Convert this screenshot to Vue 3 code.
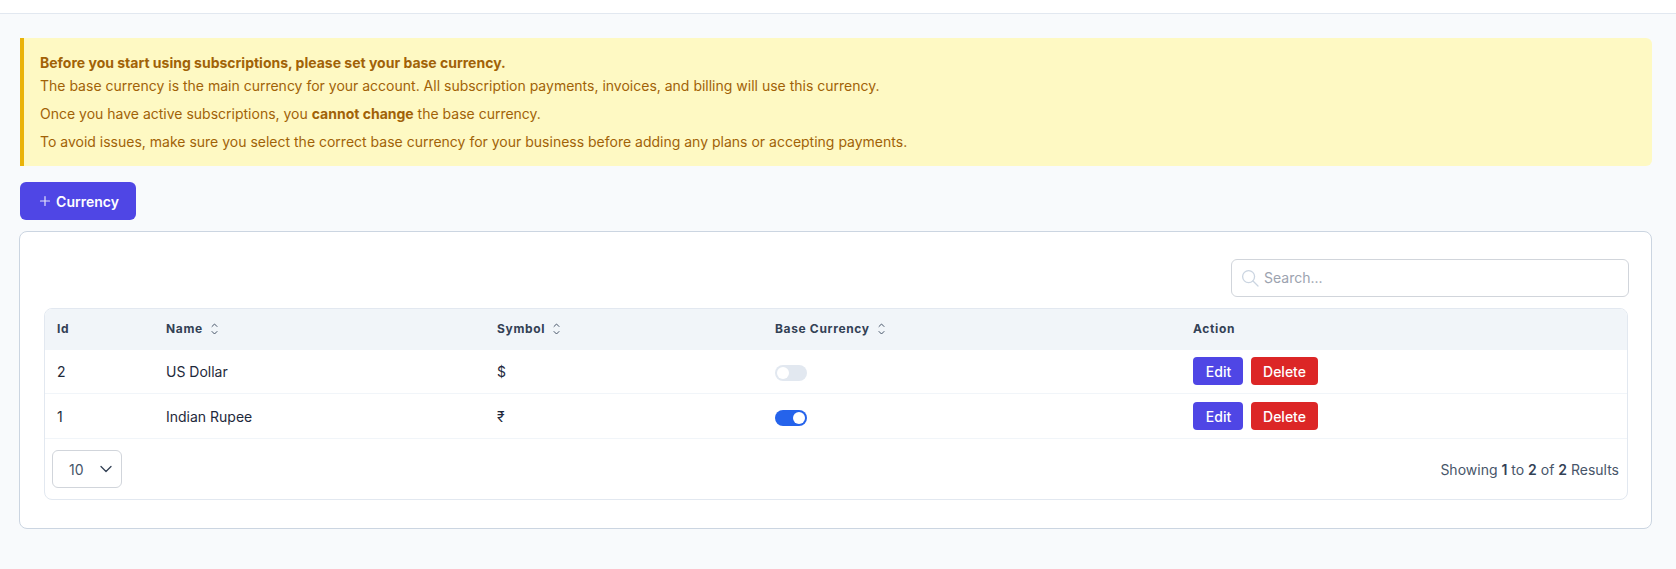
<script setup>
const rows = [
  { id: 2, name: 'US Dollar', symbol: '$', base: false },
  { id: 1, name: 'Indian Rupee', symbol: '₹', base: true },
]
const heads = [
  { label: 'Id', sort: false },
  { label: 'Name', sort: true },
  { label: 'Symbol', sort: true },
  { label: 'Base Currency', sort: true },
  { label: 'Action', sort: false },
]
</script>

<template>
  <div class="page">
    <div class="topbar"></div>
    <main class="content">
      <section class="alert">
        <p class="alert-title">Before you start using subscriptions, please set your base currency.</p>
        <p class="first">The base currency is the main currency for your account. All subscription payments, invoices, and billing will use this currency.</p>
        <p>Once you have active subscriptions, you <strong>cannot change</strong> the base currency.</p>
        <p>To avoid issues, make sure you select the correct base currency for your business before adding any plans or accepting payments.</p>
      </section>

      <button class="add-btn" type="button">
        <svg class="plus" width="14" height="14" viewBox="0 0 14 14" fill="none" stroke="currentColor" stroke-width="1.2" stroke-linecap="round"><path d="M7 2.5v9M2.5 7h9"/></svg>
        <span>Currency</span>
      </button>

      <section class="card">
        <div class="toolbar">
          <label class="search">
            <svg width="18" height="18" viewBox="0 0 18 18" fill="none" stroke="#cbd5e1" stroke-width="1.3" stroke-linecap="round"><circle cx="7.6" cy="7.6" r="6"/><path d="M12 12l5 5"/></svg>
            <input type="text" placeholder="Search..." />
          </label>
        </div>

        <div class="table-wrap">
          <table>
            <colgroup>
              <col class="c1" /><col class="c2" /><col class="c3" /><col class="c4" /><col />
            </colgroup>
            <thead>
              <tr>
                <th v-for="h in heads" :key="h.label">
                  <span class="th-in">
                    {{ h.label }}
                    <svg v-if="h.sort" width="7" height="12" viewBox="0 0 7 12" fill="none" stroke="#475569" stroke-width="1" stroke-linecap="round" stroke-linejoin="round"><path d="M1 3.5L3.5 1 6 3.5M1 8.5L3.5 11 6 8.5"/></svg>
                  </span>
                </th>
              </tr>
            </thead>
            <tbody>
              <tr v-for="r in rows" :key="r.id">
                <td>{{ r.id }}</td>
                <td>{{ r.name }}</td>
                <td>{{ r.symbol }}</td>
                <td>
                  <span class="toggle" :class="{ on: r.base }"><span class="knob"></span></span>
                </td>
                <td>
                  <div class="actions">
                    <button class="mini edit" type="button">Edit</button>
                    <button class="mini del" type="button">Delete</button>
                  </div>
                </td>
              </tr>
            </tbody>
          </table>
          <div class="foot">
            <div class="select">
              <span>10</span>
              <svg width="12" height="8" viewBox="0 0 12 8" fill="none" stroke="#334155" stroke-width="1.3" stroke-linecap="round" stroke-linejoin="round"><path d="M1 1.5L6 6.5l5-5"/></svg>
            </div>
            <p class="count">Showing <b>1</b> to <b>2</b> of <b>2</b> Results</p>
          </div>
        </div>
      </section>
    </main>
  </div>
</template>

<style>
html, body { margin: 0; background: #f8fafc; }
</style>

<style scoped>
.page {
  min-height: 569px;
  background: #f8fafc;
  font-family: Inter, "Noto Sans", sans-serif;
  box-sizing: border-box;
}
.topbar {
  background: #fff;
  border-bottom: 1px solid #e2e8f0;
  box-sizing: border-box;
  height: 14px;
}
.content {
  padding: 24px 24px 0 20px;
  display: flex;
  flex-direction: column;
}
.alert {
  background: #fef9c3;
  border-left: 4px solid #eab308;
  border-radius: 0 6px 6px 0;
  padding: 15px 16px 12px;
  color: #a16207;
  font-size: 14px;
  line-height: 20px;
  height: 128px;
  box-sizing: border-box;
}
.alert p { margin: 8px 0 0; }
.alert .alert-title { margin: 0; font-weight: 700; }
.alert .first { margin-top: 3px; }
.alert strong { font-weight: 700; }
.add-btn {
  margin-top: 16px;
  align-self: flex-start;
  width: 116px;
  height: 38px;
  display: flex;
  align-items: center;
  justify-content: center;
  gap: 4px;
  background: #4f46e5;
  color: #fff;
  border: 0;
  border-radius: 6px;
  font: 600 14px Inter, sans-serif;
  padding: 0 0 0 1px;
}
.plus { opacity: 0.85; }
.card {
  margin: 11px 0 0 -1px;
  height: 298px;
  box-sizing: border-box;
  background: #fff;
  border: 1px solid #cbd5e1;
  border-radius: 8px;
  padding: 27px 23px 0 24px;
}
.toolbar { display: flex; justify-content: flex-end; }
.search {
  width: 398px;
  height: 38px;
  box-sizing: border-box;
  border: 1px solid #d1d5db;
  border-radius: 6px;
  display: flex;
  align-items: center;
  gap: 5px;
  padding-left: 9px;
  margin-right: -1px;
}
.search input {
  border: 0;
  outline: 0;
  flex: 1;
  min-width: 0;
  padding: 0 0 1px;
  background: transparent;
  font: 400 14px Inter, sans-serif;
  color: #334155;
}
.search input::placeholder { color: #9ca3af; opacity: 1; }
.table-wrap {
  margin-top: 11px;
  border: 1px solid #e2e8f0;
  border-radius: 8px;
  overflow: hidden;
}
table {
  width: 100%;
  border-collapse: separate;
  border-spacing: 0;
  table-layout: fixed;
}
.c1 { width: 109px; }
.c2 { width: 331px; }
.c3 { width: 278px; }
.c4 { width: 418px; }
th {
  height: 41px;
  box-sizing: border-box;
  background: #f1f5f9;
  text-align: left;
  padding: 0 0 2px 12px;
  font-size: 12px;
  font-weight: 700;
  letter-spacing: 0.65px;
  color: #334155;
}
.th-in { display: inline-flex; align-items: center; gap: 8px; }
td {
  height: 44px;
  box-sizing: border-box;
  padding: 0 0 0 12px;
  border-bottom: 1px solid #f1f5f9;
  font-size: 14px;
  color: #1e293b;
}
tbody tr:last-child td { height: 45px; padding-top: 1px; }
.toggle {
  display: block;
  width: 32px;
  height: 16px;
  margin-top: 3px;
  border-radius: 8px;
  background: #e2e8f0;
  position: relative;
}
.toggle.on { background: #2563eb; }
.knob {
  position: absolute;
  top: 2px;
  left: 2px;
  width: 12px;
  height: 12px;
  border-radius: 50%;
  background: #fff;
}
.toggle.on .knob { left: 18px; }
.actions { display: flex; gap: 8px; margin-bottom: 1px; }
.mini {
  height: 28px;
  border: 0;
  border-radius: 4px;
  color: #fff;
  font: 500 14px Inter, sans-serif;
  padding: 0;
}
.edit { width: 50px; background: #4f46e5; padding-left: 1px; }
.del { width: 67px; background: #dc2626; }
.foot {
  height: 60px;
  display: flex;
  align-items: center;
  justify-content: space-between;
  padding: 0 8px 0 7px;
}
.select {
  width: 70px;
  height: 38px;
  box-sizing: border-box;
  border: 1px solid #d1d5db;
  border-radius: 6px;
  display: flex;
  align-items: center;
  justify-content: space-between;
  padding: 0 9px 0 16px;
  font-size: 14px;
  color: #475569;
}
.count {
  margin: 0;
  font-size: 14px;
  color: #475569;
}
.count b { font-weight: 600; color: #334155; }
</style>
